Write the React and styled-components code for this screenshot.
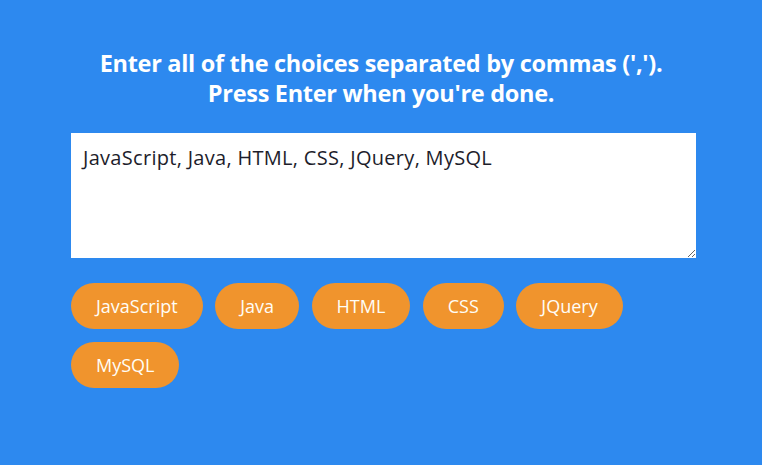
import React from "react";
import styled, { createGlobalStyle } from "styled-components";

const Global = createGlobalStyle`
  html, body { margin: 0; padding: 0; background: #2d89ef; }
  body { font-family: "Open Sans", "Noto Sans", sans-serif; }
`;

const Page = styled.main`
  min-height: 465px;
  background: #2d89ef;
  display: flex;
  flex-direction: column;
  align-items: center;
  padding-top: 48px;
  box-sizing: border-box;
`;

const Title = styled.h3`
  margin: 0 0 25px;
  color: #ffffff;
  font-size: 23.5px;
  font-weight: 700;
  line-height: 30px;
  text-align: center;
  letter-spacing: -0.3px;
`;

const Column = styled.div`
  width: 625px;
  margin-left: 5px;
  display: flex;
  flex-direction: column;
  gap: 25px;
`;

const Input = styled.textarea`
  width: 625px;
  height: 125px;
  box-sizing: border-box;
  border: none;
  outline: none;
  padding: 11px 12px;
  font-family: "Open Sans", sans-serif;
  font-size: 20px;
  line-height: 28px;
  letter-spacing: 0.3px;
  color: #1d1d2b;
  background: #fff;
  resize: vertical;
  display: block;
`;

const Tags = styled.div`
  display: flex;
  flex-wrap: wrap;
  gap: 13px 12.5px;
`;

const Tag = styled.span`
  height: 46px;
  padding: 0 25px;
  border-radius: 23px;
  background: #f0942d;
  color: #fffdf6;
  font-size: 18px;
  display: inline-flex;
  align-items: center;
  box-sizing: border-box;
`;

const choices = ["JavaScript", "Java", "HTML", "CSS", "JQuery", "MySQL"];

export default function App() {
  return (
    <>
      <Global />
      <Page>
        <Title>
          Enter all of the choices separated by commas (',').
          <br />
          Press Enter when you're done.
        </Title>
        <Column>
          <Input
            spellCheck={false}
            defaultValue="JavaScript, Java, HTML, CSS, JQuery, MySQL"
          />
          <Tags>
            {choices.map((c) => (
              <Tag key={c}>{c}</Tag>
            ))}
          </Tags>
        </Column>
      </Page>
    </>
  );
}
